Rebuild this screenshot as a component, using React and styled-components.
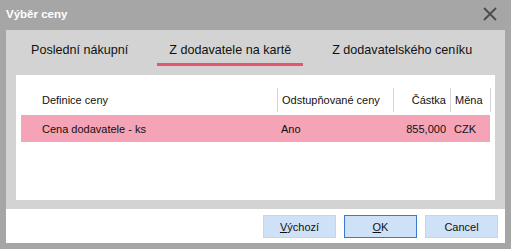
import React from "react";
import styled, { createGlobalStyle } from "styled-components";

const GlobalStyle = createGlobalStyle`
  html, body {
    margin: 0;
    padding: 0;
    background: #a6a6a6;
  }
  body {
    font-family: "Liberation Sans", Arial, sans-serif;
    color: #111;
  }
`;

const Dialog = styled.div`
  width: 511px;
  height: 249px;
  box-sizing: border-box;
  background: #a6a6a6;
  padding: 0 6px 6px 6px;
  display: flex;
  flex-direction: column;
`;

const TitleBar = styled.div`
  height: 30px;
  display: flex;
  align-items: center;
  justify-content: space-between;
  padding-bottom: 2px;
  box-sizing: border-box;
`;

const Title = styled.span`
  color: #fff;
  font-weight: bold;
  font-size: 11.5px;
`;

const CloseButton = styled.div`
  width: 16px;
  height: 16px;
  margin-right: 7px;
  display: flex;
  align-items: center;
  justify-content: center;
`;

const Body = styled.div`
  background: #d3d3d3;
  padding: 0 10px 9px 10px;
  display: flex;
  flex-direction: column;
`;

const TabBar = styled.div`
  height: 45px;
  box-sizing: border-box;
  padding: 12px 0 0 3px;
  display: flex;
  align-items: flex-start;
  gap: 17px;
`;

const Tab = styled.div`
  font-size: 12.6px;
  line-height: 16px;
  padding: 0 12px 5px 12px;
  border-bottom: 3px solid ${(p) => (p.$active ? "#e4566f" : "transparent")};
  color: #111;
`;

const Panel = styled.div`
  background: #fff;
  height: 125px;
  box-sizing: border-box;
  padding: 13px 5px 0 5px;
  display: flex;
  flex-direction: column;
  gap: 3px;
  font-size: 11px;
`;

const Grid = styled.div`
  display: grid;
  grid-template-columns: 256px 116px 57px 41px;
  height: ${(p) => (p.$header ? "24px" : "27px")};
  background: ${(p) => (p.$selected ? "#f5a3b6" : "transparent")};
  width: ${(p) => (p.$header ? "470px" : "469px")};
`;

const Cell = styled.div`
  display: flex;
  align-items: center;
  padding: 0 4px;
  justify-content: ${(p) => (p.$right ? "flex-end" : "flex-start")};
  border-left: ${(p) => (p.$sep ? "1px solid #d4d4d4" : "none")};
  border-right: ${(p) => (p.$end ? "1px solid #d4d4d4" : "none")};
  white-space: nowrap;
  &:first-child {
    padding-left: 21px;
  }
`;

const Footer = styled.div`
  background: #fff;
  height: 34px;
  box-sizing: border-box;
  padding: 6px 7px 0 0;
  display: flex;
  justify-content: flex-end;
  align-items: flex-start;
  gap: 8px;
`;

const Button = styled.div`
  width: 73px;
  height: 23px;
  box-sizing: border-box;
  background: #cfe1f7;
  border: 1px solid ${(p) => (p.$default ? "#3a7bd0" : "#c2d6ee")};
  display: flex;
  align-items: center;
  justify-content: center;
  font-size: 11px;
  color: #111;
  u {
    text-decoration: underline;
  }
`;

export default function App() {
  return (
    <>
      <GlobalStyle />
      <Dialog>
        <TitleBar>
          <Title>Výběr ceny</Title>
          <CloseButton>
            <svg width="14" height="14" viewBox="0 0 14 14">
              <path d="M1 1 L13 13 M13 1 L1 13" stroke="#4b4b4b" strokeWidth="1.8" fill="none" />
            </svg>
          </CloseButton>
        </TitleBar>
        <Body>
          <TabBar>
            <Tab>Poslední nákupní</Tab>
            <Tab $active>Z dodavatele na kartě</Tab>
            <Tab>Z dodavatelského ceníku</Tab>
          </TabBar>
          <Panel>
            <Grid $header>
              <Cell>Definice ceny</Cell>
              <Cell $sep>Odstupňované ceny</Cell>
              <Cell $sep $right>Částka</Cell>
              <Cell $sep $end>Měna</Cell>
            </Grid>
            <Grid $selected>
              <Cell>Cena dodavatele - ks</Cell>
              <Cell>Ano</Cell>
              <Cell $right>855,000</Cell>
              <Cell>CZK</Cell>
            </Grid>
          </Panel>
        </Body>
        <Footer>
          <Button>
            <span><u>V</u>ýchozí</span>
          </Button>
          <Button $default>
            <span><u>O</u>K</span>
          </Button>
          <Button>Cancel</Button>
        </Footer>
      </Dialog>
    </>
  );
}
